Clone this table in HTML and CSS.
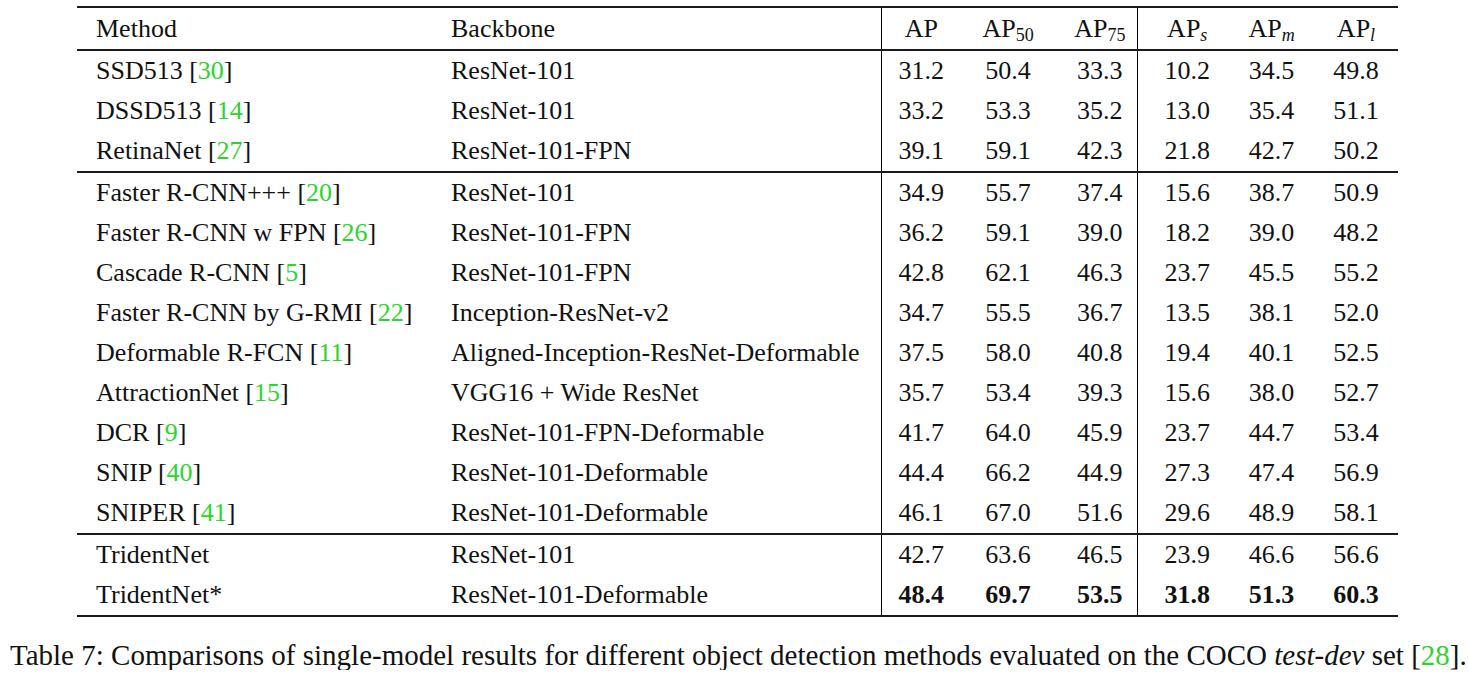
FILE: index.html
```html
<!DOCTYPE html>
<html>
<head>
<meta charset="utf-8">
<link rel="stylesheet" href="styles.css">
</head>
<body>
<table class="results">
  <colgroup>
    <col class="c-method"><col class="c-backbone">
    <col class="c-ap"><col class="c-ap50"><col class="c-ap75">
    <col class="c-aps"><col class="c-apm"><col class="c-apl">
  </colgroup>
  <thead>
    <tr>
      <th class="method">Method</th>
      <th class="backbone">Backbone</th>
      <th class="num g1">AP</th>
      <th class="num">AP<sub class="sub">50</sub></th>
      <th class="num p3">AP<sub class="sub">75</sub></th>
      <th class="num g2">AP<sub class="sub it">s</sub></th>
      <th class="num">AP<sub class="sub it">m</sub></th>
      <th class="num">AP<sub class="sub it">l</sub></th>
    </tr>
  </thead>
  <tbody class="grp">
    <tr><td class="method">SSD513 [<span class="cite">30</span>]</td><td class="backbone">ResNet-101</td><td class="num g1">31.2</td><td class="num">50.4</td><td class="num p3">33.3</td><td class="num g2">10.2</td><td class="num">34.5</td><td class="num">49.8</td></tr>
    <tr><td class="method">DSSD513 [<span class="cite">14</span>]</td><td class="backbone">ResNet-101</td><td class="num g1">33.2</td><td class="num">53.3</td><td class="num p3">35.2</td><td class="num g2">13.0</td><td class="num">35.4</td><td class="num">51.1</td></tr>
    <tr><td class="method">RetinaNet [<span class="cite">27</span>]</td><td class="backbone">ResNet-101-FPN</td><td class="num g1">39.1</td><td class="num">59.1</td><td class="num p3">42.3</td><td class="num g2">21.8</td><td class="num">42.7</td><td class="num">50.2</td></tr>
  </tbody>
  <tbody class="grp">
    <tr><td class="method">Faster R-CNN+++ [<span class="cite">20</span>]</td><td class="backbone">ResNet-101</td><td class="num g1">34.9</td><td class="num">55.7</td><td class="num p3">37.4</td><td class="num g2">15.6</td><td class="num">38.7</td><td class="num">50.9</td></tr>
    <tr><td class="method">Faster R-CNN w FPN [<span class="cite">26</span>]</td><td class="backbone">ResNet-101-FPN</td><td class="num g1">36.2</td><td class="num">59.1</td><td class="num p3">39.0</td><td class="num g2">18.2</td><td class="num">39.0</td><td class="num">48.2</td></tr>
    <tr><td class="method">Cascade R-CNN [<span class="cite">5</span>]</td><td class="backbone">ResNet-101-FPN</td><td class="num g1">42.8</td><td class="num">62.1</td><td class="num p3">46.3</td><td class="num g2">23.7</td><td class="num">45.5</td><td class="num">55.2</td></tr>
    <tr><td class="method">Faster R-CNN by G-RMI [<span class="cite">22</span>]</td><td class="backbone">Inception-ResNet-v2</td><td class="num g1">34.7</td><td class="num">55.5</td><td class="num p3">36.7</td><td class="num g2">13.5</td><td class="num">38.1</td><td class="num">52.0</td></tr>
    <tr><td class="method">Deformable R-FCN [<span class="cite">11</span>]</td><td class="backbone">Aligned-Inception-ResNet-Deformable</td><td class="num g1">37.5</td><td class="num">58.0</td><td class="num p3">40.8</td><td class="num g2">19.4</td><td class="num">40.1</td><td class="num">52.5</td></tr>
    <tr><td class="method">AttractionNet [<span class="cite">15</span>]</td><td class="backbone">VGG16 + Wide ResNet</td><td class="num g1">35.7</td><td class="num">53.4</td><td class="num p3">39.3</td><td class="num g2">15.6</td><td class="num">38.0</td><td class="num">52.7</td></tr>
    <tr><td class="method">DCR [<span class="cite">9</span>]</td><td class="backbone">ResNet-101-FPN-Deformable</td><td class="num g1">41.7</td><td class="num">64.0</td><td class="num p3">45.9</td><td class="num g2">23.7</td><td class="num">44.7</td><td class="num">53.4</td></tr>
    <tr><td class="method">SNIP [<span class="cite">40</span>]</td><td class="backbone">ResNet-101-Deformable</td><td class="num g1">44.4</td><td class="num">66.2</td><td class="num p3">44.9</td><td class="num g2">27.3</td><td class="num">47.4</td><td class="num">56.9</td></tr>
    <tr><td class="method">SNIPER [<span class="cite">41</span>]</td><td class="backbone">ResNet-101-Deformable</td><td class="num g1">46.1</td><td class="num">67.0</td><td class="num p3">51.6</td><td class="num g2">29.6</td><td class="num">48.9</td><td class="num">58.1</td></tr>
  </tbody>
  <tbody class="grp last">
    <tr><td class="method">TridentNet</td><td class="backbone">ResNet-101</td><td class="num g1">42.7</td><td class="num">63.6</td><td class="num p3">46.5</td><td class="num g2">23.9</td><td class="num">46.6</td><td class="num">56.6</td></tr>
    <tr class="best"><td class="method">TridentNet*</td><td class="backbone">ResNet-101-Deformable</td><td class="num g1">48.4</td><td class="num">69.7</td><td class="num p3">53.5</td><td class="num g2">31.8</td><td class="num">51.3</td><td class="num">60.3</td></tr>
  </tbody>
</table>
<p class="caption">Table 7: Comparisons of single-model results for different object detection methods evaluated on the COCO <i>test-dev</i> set [<span class="cite">28</span>].</p>
</body>
</html>
```

FILE: styles.css
```css
html, body {
  margin: 0;
  padding: 0;
  background: #fff;
}
body {
  font-family: "Liberation Serif", "Times New Roman", serif;
  color: #111;
}
.results {
  margin: 6px 0 0 77px;
  width: 1321px;
  table-layout: fixed;
  border-collapse: collapse;
  font-size: 26px;
}
.c-method { width: 356px; }
.c-backbone { width: 448px; }
.c-ap { width: 80px; }
.c-ap50 { width: 94px; }
.c-ap75 { width: 82px; }
.c-aps { width: 92px; }
.c-apm { width: 85px; }
.c-apl { width: 84px; }

.results th, .results td {
  font-weight: normal;
  padding: 0;
  height: 40px;
  white-space: nowrap;
  line-height: 1;
}
.results thead tr {
  border-top: 2px solid #1a1a1a;
  border-bottom: 2px solid #1a1a1a;
}
.results thead th { height: 41px; }
.results .grp { border-bottom: 2px solid #1a1a1a; }
.method { text-align: left; padding-left: 19px !important; }
.backbone { text-align: left; padding-left: 18px !important; }
.num { text-align: center; }
.g1, .g2 { border-left: 1px solid #000; }
.p3, .g2 { padding-left: 8px !important; }
.sub {
  font-size: 18px;
  vertical-align: -4px;
  line-height: 0;
}
.it { font-style: italic; }
.cite { color: #2ad62a; }
.best .num { font-weight: bold; }

.caption {
  margin: 24px 0 0 10px;
  font-size: 29px;
  white-space: nowrap;
  line-height: 1;
}
```
